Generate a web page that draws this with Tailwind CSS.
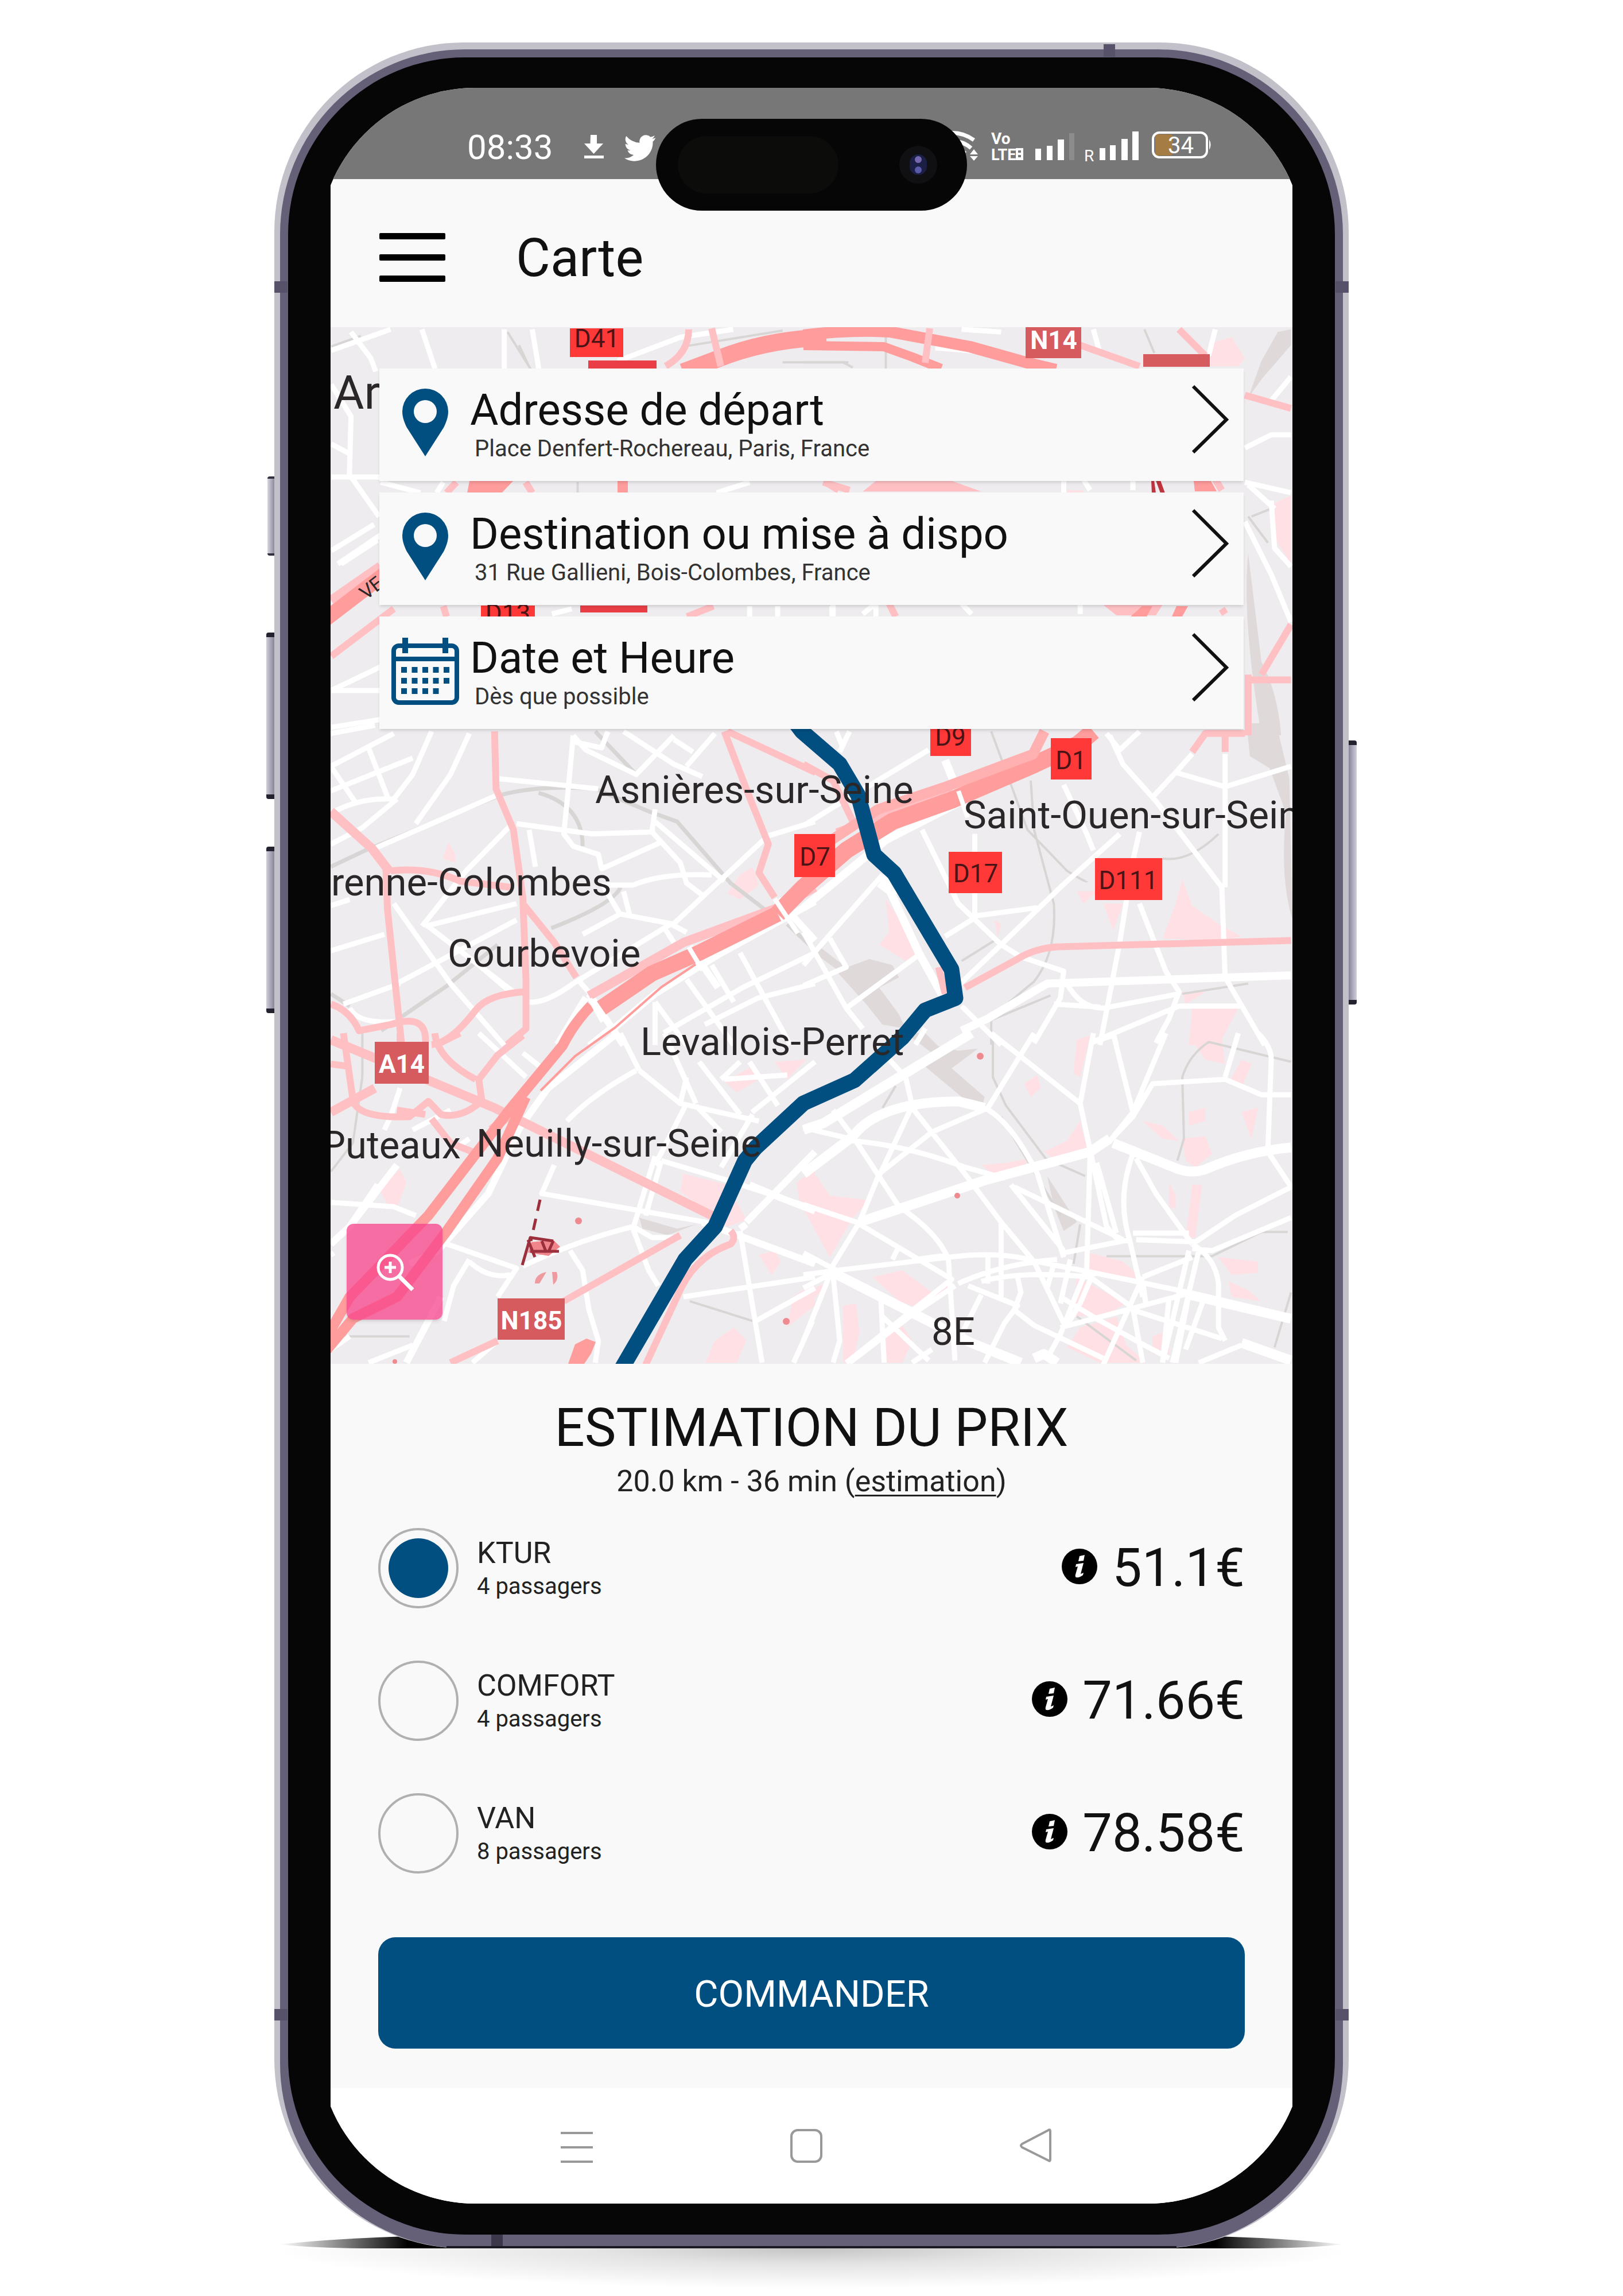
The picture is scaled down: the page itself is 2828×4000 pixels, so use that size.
<!DOCTYPE html>
<html lang="fr">
<head>
<meta charset="utf-8">
<meta name="viewport" content="width=device-width, initial-scale=1">
<title>Carte</title>
<script src="https://cdn.jsdelivr.net/npm/@tailwindcss/browser@4"></script>
</head>
<body class="bg-white font-['Roboto',sans-serif] text-[#111]">
<main class="overflow-hidden pt-[74px]">
  <div class="relative z-10 mx-auto w-full max-w-[1872px]">
    <!-- contact shadow -->
    <svg class="absolute bottom-0 left-0 h-[60px] w-full overflow-visible" viewBox="0 0 1872 60" preserveAspectRatio="none" aria-hidden="true">
      <defs>
        <linearGradient id="floor"><stop offset="0" stop-color="#000" stop-opacity="0"/><stop offset=".12" stop-color="#000"/><stop offset=".88" stop-color="#000"/><stop offset="1" stop-color="#000" stop-opacity="0"/></linearGradient>
      </defs>
      <path fill="url(#floor)" d="M10 53Q150 38 330 38H1542Q1722 38 1862 53Q1800 60 1700 60H172Q70 60 10 53z"/>
    </svg>
    <!-- side buttons -->
    <div class="absolute top-[756px] -left-[12px] h-[138px] w-[16px] rounded-sm border-y-4 border-[#33313f] bg-linear-to-r from-[#d8d7de] to-[#77718a]"></div>
    <div class="absolute top-[1028px] -left-[14px] h-[290px] w-[18px] rounded-sm border-y-8 border-[#24222e] bg-linear-to-r from-[#d0cfd8] to-[#77718a]"></div>
    <div class="absolute top-[1401px] -left-[14px] h-[290px] w-[18px] rounded-sm border-y-8 border-[#24222e] bg-linear-to-r from-[#d0cfd8] to-[#77718a]"></div>
    <div class="absolute top-[1216px] -right-[14px] h-[460px] w-[18px] rounded-sm border-y-8 border-[#24222e] bg-linear-to-l from-[#d0cfd8] to-[#77718a]"></div>

    <div class="relative rounded-[330px] bg-[#c2c0c9] px-[10px] pt-[12px]">
      <div class="rounded-[322px] bg-[#665f78] px-[14px] pt-[14px] pb-[24px]">
        <div class="rounded-[308px] bg-[#060606] px-[54px] pt-[53px] pb-[54px]">
          <div class="overflow-hidden rounded-[272px] bg-[#060606] px-[20px]">
            <div class="bg-[#f9f9f9]">

              <!-- status bar -->
              <div class="flex h-[159px] items-start justify-between bg-[#777] pt-[69px] pr-[136px] pl-[238px] text-white">
                <div class="flex items-start">
                  <span class="text-[60px] leading-[70px]">08:33</span>
                  <svg class="ml-[54px] h-[60px] w-[130px]" viewBox="1017 222 130 60" fill="#fff" aria-hidden="true">
                    <path d="M1029 235h11v15h11l-16.500 18-16.500-18h10.500zM1018 271h34v5h-34z"/>
                    <path transform="translate(1088 229) scale(2.300)" d="M23.600 4.900c-.9.400-1.800.600-2.800.800 1-.6 1.800-1.600 2.100-2.700-.9.600-2 1-3.100 1.200A4.900 4.900 0 0 0 11.500 8.600 13.900 13.900 0 0 1 1.400 3.500a4.900 4.900 0 0 0 1.500 6.500c-.8 0-1.500-.2-2.200-.6 0 2.300 1.600 4.400 3.900 4.900-.7.200-1.500.2-2.200.1.600 1.900 2.400 3.300 4.600 3.400A9.900 9.900 0 0 1 0 20.200 13.900 13.900 0 0 0 21.500 7.700c.8-.7 1.600-1.600 2.100-2.800z"/>
                  </svg>
                </div>
                <svg class="h-[64px] w-[436px] overflow-visible" viewBox="1680 222 436 64" fill="#fff" aria-hidden="true">
                  <path d="M1640 234q32-8 57 10M1650 248q24-6 42 10M1660 264q12-4 22 3" fill="none" stroke="#fff" stroke-width="7"/>
                  <path d="M1690 269l7-9 7 9zM1690 272h14l-7 8z"/>
                  <text x="1727" y="251" font-size="28" font-weight="700">Vo</text>
                  <text x="1727" y="279" font-size="27" font-weight="700">LTE</text>
                  <path fill-rule="evenodd" d="M1770 258h13v21h-13zM1774 262v4h5v-4zM1774 270v4h5v-4z"/>
                  <path d="M1804 259h10v20h-10zM1824 254h10v25h-10zM1843 243h11v36h-11z"/>
                  <path fill="#8c8c8c" d="M1863 232h9v47h-9z"/>
                  <text x="1889" y="281" font-size="28">R</text>
                  <path d="M1916 258h10v21h-10zM1934 253h10v26h-10zM1954 242h11v37h-11zM1973 229h11v50h-11z"/>
                  <rect x="2013" y="234" width="30" height="37" rx="4" fill="#a57c43"/>
                  <rect x="2009" y="231" width="94" height="43" rx="11" fill="none" stroke="#fff" stroke-width="4"/>
                  <path d="M2107 243q5 9 0 18z"/>
                  <text x="2035" y="267" font-size="40">34</text>
                </svg>
              </div>

              <!-- app bar -->
              <header class="flex h-[258px] items-center gap-[123px] pt-[14px] pl-[85px]">
                <button type="button" aria-label="Menu" class="flex w-[115px] flex-col gap-[26px]">
                  <span class="h-[11px] w-full rounded-xs bg-black"></span>
                  <span class="h-[11px] w-full rounded-xs bg-black"></span>
                  <span class="h-[11px] w-full rounded-xs bg-black"></span>
                </button>
                <h1 class="pt-[4px] text-[92px] leading-[108px]">Carte</h1>
              </header>

              <!-- map -->
              <section aria-label="Carte du trajet" class="relative min-h-[1806px] overflow-hidden bg-[#efecef] px-[85px] pt-[72px]">
                <svg class="absolute inset-0 h-full w-full" viewBox="576 570 1676 1806" preserveAspectRatio="xMidYMid slice" fill="none" stroke-linejoin="round">
                  <!-- built-up areas and parks -->
                  <g fill="#ffe0e4">
                    <path transform="translate(1400 560) scale(.574 .4592)" d="M1240 80l60-20 40 80-20 30h-90zM1430 690l50-30v260l-50-100zM800 640h50v70h-40z"/>
                    <path transform="translate(560 1260) scale(.5485 .3571)" d="M385 660l20-80 20 60v40zM1330 740l40-40 20 90-60 70-40-30z"/>
                    <path transform="translate(1400 1260) scale(.574 .3571)" d="M250 860l80 180 30 100-50 20-80-80 30-60zM1130 880l20-120 30 130 80 90 70 60-60 20-180-10zM910 880h60l-30 130zM580 960l20 20-10 60zM1180 1390h140l-60 180h-90zM1150 1310h70l-60 60zM830 820h60l-40 60z"/>
                    <path transform="translate(560 1800) scale(.5485 .3827)" d="M180 700l70-80 20 60-30 120-30-20zM1150 640l140 50 60 160-60 30-150-160zM1280 220l90-70 20 60-70 60zM1440 130l100-10-60 90zM1510 680l58-60v180l-50-40zM1250 1400l60-60 40 60-30 100h-100zM1500 1200l68-70v110l-90 100zM1390 1010l50-20 20 50-30 60z"/>
                    <path transform="translate(1400 1800) scale(.574 .3827)" d="M0 680l40-30 40 90 120 20-50 80-70 180L0 800zM210 1110l90-30 90 100 60-60v60l-100 70-60-30zM0 1180l80-50-80 130zM120 1240l40-10 10 130-20 140h-30zM240 1380l60-50 30 70-30 100h-60zM870 1000l100 40 60 80-90-20-80-20zM830 1110l150 120-60 50-100 10zM840 1340l110-50 30 130 60 80-140 0-100-70zM540 600l80-10 60-20-10 60-80 30zM730 540l70-50 40-90 20 130-100 40zM830 30l40-20-30 190-20-20zM670 230l40-40 10 60-30 40zM1170 10l100 10 10 120-60-20zM1330 120l30 20-30 110-40-20zM1030 400l60 20 50 70-50-10zM1170 360l50-20v60l-50 20zM1150 480l70-10 20 80-50 60-30-30zM1180 690h30l-20 240h-30zM1330 360l50-20-20 140zM1260 1020l120 20v50l-80 10zM1290 1130l60 40 40 50-90-20zM1110 680l20 60v60l-20-10zM1060 1380l50-30v110h-50z"/>
                  </g>
                  <!-- railways -->
                  <g fill="#dfdad9">
                    <path transform="translate(1400 560) scale(.574 .4592)" d="M1480 30v60l-90 130-40 70 40-140 50-110zM1350 880q-20 240 40 690h60q-10-160-60-280z"/>
                    <path transform="translate(1400 1260) scale(.574 .3571)" d="M1345 0h90l40 270 10 690q-40-200-20-520l-50-220-60-60zM100 1210l100-60 70 30 20 60-60 50 60 130 20 70-70-20-50-100zM40 1080l90 110-30 10-60-70z"/>
                    <path transform="translate(1400 1800) scale(.574 .3827)" d="M310 0h60l40 60 60 20 60-10-80 90 100 130-10 60-60-60-120-150 30-50zM740 650l30 70 60 140-40 40-30-110z"/>
                    <path transform="translate(560 1800) scale(.5485 .3827)" d="M1010 840l120 50 60-20-90 50-80-30z"/>
                  </g>
                  <g stroke="#d8d5d5" stroke-width="4">
                    <g transform="translate(560 560) scale(.574 .4592)"><path vector-effect="non-scaling-stroke" d="M30 95L120 55M565 40l70 140M600 90l30 80M1100 95l300-60M1400 155h200M778 610v40"/></g>
                    <g transform="translate(1400 560) scale(.574 .4592)"><path vector-effect="non-scaling-stroke" d="M0 155l120 0 30 20M1035 30l30 90M250 30v150M1350 740l60 100M1360 740l60-30"/></g>
                    <g transform="translate(560 1260) scale(.5485 .3571)"><path vector-effect="non-scaling-stroke" stroke-width="7" d="M30 700l110-80 430-270q120-50 300-30l170 110 90 50 170 300 110 130M690 340q140 60 140 260M730 1000q200-120 220-200M870 40l130 210M190 1500L400 1280l160-200M30 1320l60 60M1480 980l90 130"/></g>
                    <g transform="translate(1400 1260) scale(.574 .3571)"><path vector-effect="non-scaling-stroke" d="M570 40l60 260 50 220 120 200q60 60 60 50M690 280l10 240 60 360q10 240-60 380l-120 160M1260 540q-90 140-170 120M480 1160l100-100M570 1568v-120l180-120M1150 1320l200-50"/></g>
                    <g transform="translate(560 1800) scale(.5485 .3827)"><path vector-effect="non-scaling-stroke" d="M130 0v200l-30 300-70 130M1170 1220l200 90M30 1380h250"/></g>
                    <g transform="translate(1400 1800) scale(.574 .3827)"><path vector-effect="non-scaling-stroke" d="M575 0v200l40 130 120 240 120 80M1480 130l-250-90q-60 60-80 160l5 280-20 100M600 380l180 450M840 870l-20 180M920 1015h320l150-110h80M1480 1180l-50 250M830 1290l180 200M240 340l40-100"/></g>
                  </g>
                  <!-- streets -->
                  <g stroke="#fff" stroke-width="9">
                    <g transform="translate(560 560) scale(.574 .4592)"><path vector-effect="non-scaling-stroke" d="M30 110L210 30M90 40l60 100 15 50M305 30l40 150M555 30v150M640 30l20 150M900 150l190-90 160-30M30 240l60 120-5 220 90 160M30 590h150M30 465l60 40M50 920l130-110M30 870l130-100M60 920l110-90M180 610l120 40M370 610l-20 40M1200 650l100-40M700 1110l60-20M1300 1080v40M1385 1080v40M1550 1080v40M30 1400l150-90M30 1400h150M30 1540l150-30"/></g>
                    <g transform="translate(1400 560) scale(.574 .4592)"><path vector-effect="non-scaling-stroke" d="M400 100q240 20 300 70M880 30l20 90M1250 30l-20 100M1480 210l-60 90M1340 480l80-50h60M1340 610l140 40M1350 620l80 90M1420 680l10 180 50 70M1340 760l80 200 60 180M480 30l120 10M790 600v50M850 600l20 40M1000 600v40M90 1070v50M220 1070v50M480 1070l30 40M840 1070v40M180 1110l40-40"/></g>
                    <g transform="translate(560 1260) scale(.5485 .3571)"><path vector-effect="non-scaling-stroke" d="M30 210L230 50M30 330l260-160M30 440q90-80 200-70l60-120 60-210M470 50l-60 200L300 490M30 590l100-80 110-140M30 210l80 180M150 120l60 240M30 50l140-40M170 610l390-260M560 270l320 50M600 500L460 720 320 990M620 490l240 50 200-10M800 60l-20 330-10 150 30 60 80 40 10 70 190-130M660 520l20 180M1060 420l-10 110 90 150 20 100 60 70M1060 480l220 290M960 40l160 160 90 60M1250 50l-90 160M1120 60L1000 250 840 130 800 60M800 90l90 30 20-80M1120 80l60 60M890 790h100q90-60 250-50M1568 480l-150 70-300 430-170-50-50-130M960 820l20 120M1110 980L800 1270q-90 100-140 90M830 1030l120-100M230 880l180 390 170 300M30 1110l170-80M30 890l60-30M240 1270l380-310M70 1370l180-100M330 990l290-110M330 980l280 330M500 1180l100 130M90 1390q30 90 180 60M860 1330l-40-70M1090 1000l30 70M1110 980l50 40"/></g>
                    <g transform="translate(560 1260) scale(.5485 .3571)"><path vector-effect="non-scaling-stroke" d="M1568 1120l-230 170-250 220M1568 1270l-180 70-170 130M1160 1250l150 320M1240 1180l70 180M1330 1120l160 450M1060 1360v210M1060 1360l100 210M930 1470l-80 100"/><path vector-effect="non-scaling-stroke" stroke-width="12" d="M1568 870L1260 1130 1060 1320 920 1500M1450 860l118 200M1170 1090l90 200M850 1320l110 250M750 1568l90-230"/></g>
                    <g transform="translate(1400 1260) scale(.574 .3571)"><path vector-effect="non-scaling-stroke" d="M100 40l20 80M140 40l-30 100M380 130L100 400 0 500M930 60l40 140 100 180 200 420 10 440 120 330M1280 150v650M1180 150l-50 90-70 120M1130 240l150 70 200-100M1020 40l-60 90-40-80M960 540l-180 260-180 280-130 200M360 520l110 360 130 200 60 60 130 70-10 130-80 220M520 540l-0 400 190-40M430 1040l90-90M1020 530l-20 140-40 400-60 500M1020 880l80 330 40 100-30 130-40 120M790 300l70 240 20 80M240 740L70 1050 0 1180M80 1050l50 140-130 90M0 1020l130 370 50 100M350 1130l-220 260M480 1380l120 190M800 1270q40 120 110 120l230-70M760 1370l140 15M870 1560l270-180h190M340 1568l30-80M940 1510l10 60"/><path vector-effect="non-scaling-stroke" stroke-width="14" d="M430 180l50 200M480 1500l80-60 180-170 740-40M240 740l110 380 90 260M0 900l250-330 230-190M230 780l50 60"/></g>
                    <g transform="translate(560 1800) scale(.5485 .3827)"><path vector-effect="non-scaling-stroke" d="M780 400q80-120 220-230M1010 170l-60-170M1010 170l130 150 250 80M1140 320l20-120M1160 320l-100 280M1090 0l100 320M1130 130l60 190M1200 130l130 240M1270 210l60-80M1360 130l90 200M1568 130l-200 230M1480 190l-200 20M740 600l-40 130 520 130M1080 580l-50 250M1060 560l-70 330 50 190 30 70M1080 580l210 90 280 130M1190 330l80 120M1270 610l100-240M640 1060q180-120 350-180l60 50h70M790 990l40 90 20 180 30 140-10 100M400 960l220 110-60 130M470 1030l-50 120-30 160M470 1040q60 80 130 60M30 770l200 20 70 40M30 1010l10-10M30 1440l60-60M560 1400l-80 100M1150 1200l418-90M1330 900l70 600M1380 1310l188-150M1500 1500l60-190M150 1500l140-80M250 250l-30 130-20 60M290 440l120-90M500 0l150 200M470 480l-60 60M640 90l70 80"/><path vector-effect="non-scaling-stroke" stroke-width="12" d="M940 0l-220 250-90 180-100 300-160 260-90 60M180 690L90 880 30 960M240 600L90 880M1350 860l218-320M1210 860l358 190M270 1500l110-300M1330 890l20-20M1360 690l100 60 108 60"/></g>
                    <g transform="translate(1400 1800) scale(.574 .3827)"><path vector-effect="non-scaling-stroke" d="M570 0l270 320 80 560 40 70M700 0L560 340 390 450 230 640 170 860 80 1080M260 120l50 80 20 130-100 320M330 340l160 300M90 350l60 120 140 320q120 120 150 240l20 460M150 490q160 20 340 120l120 50M550 340q80 60 160 300l80 380M490 640l110 220v340M520 700l80 160 100 180 90 280M630 690l160 300M640 700l330 240M880 0l-40 320M880 40l60-30M940 0l60 360-70 130M1100 0l-100 360M930 490l70-110 60-150 220-20 110 70h90M1320 0l-40 200M1380 0q40 60 40 120l-10 400M1410 540l70 160-170 130-130 130M1480 840l-240 150-60-10M1000 550q-50 200-10 390l40 260M1010 570l60 160 110 230M870 550l-10 520-80 300-40 110M890 590l60 320M1180 960q70 60 80 180v200l20 60M1200 990l-80 510M1170 990l-80 510M1030 1110l150-90M1000 910h170M1010 940l180 10M0 780l160 80 290 260-320 380M0 1100l100-20 340-60q160-30 270 20l170 50 290 90M790 1000l200-60M340 1030l100-20M270 1030l20-60M80 1100L0 1400M90 1100l20 300-20 100M0 1160l90-70M100 1080L0 1000M460 1150l-120 120-200 230M500 1150l150 90-40 80-60 180M540 1190l-60 180M470 1140q130-90 300-110M540 1130q120-50 330-20M760 1050l-20 110M810 1030l-30 200M560 1010v130M650 1110l10 70-20 80 60 70 210 150M780 1340l400-160M800 1330l40-100M780 1200l110 100 120 100 100 80M870 1110l130 140 30 250M1030 1110l-120 400M1000 1260l270 130M880 1090l-40 140M1110 1200l-20 300M1170 1190l-40 310M1220 1190l-60 250M1030 1130l10 110M1200 1500l130-80M235 1210l10 290M240 1290l140 200M330 1500l60-60M0 430l140 50"/><path vector-effect="non-scaling-stroke" stroke-width="17" d="M510 0L60 410 0 440M150 470q80-160 320-160l80 30M0 640l150-170M170 860l380-190 320-130 60-60M940 500l200 120q40 20 80 0 120-80 260-100M90 1090l420 320 150 90M1170 1190l310 110M700 1480l30-20 40 40M1330 1410l150 80"/></g>
                  </g>
                  <!-- main roads -->
                  <g stroke="#ffc0c4" stroke-width="12">
                    <g transform="translate(560 560) scale(.574 .4592)"><path vector-effect="non-scaling-stroke" d="M1115 30q0 90-70 140M370 1080l10 40M380 650l30-40M640 650l-20-40M1110 1120l80-40M30 1270l190-180M1530 610l40 30"/><path vector-effect="non-scaling-stroke" stroke-width="18" d="M30 1060l150-130"/></g>
                    <g transform="translate(1400 560) scale(.574 .4592)"><path vector-effect="non-scaling-stroke" d="M840 90l180 80M1140 30l80 100M1340 280l140 50M1280 1110l-10-20M260 1070l20 50M1390 1340l90-190M1340 1360h140M1350 1340v230M1250 600l20 40M60 610l80 30"/><path fill="#ffc0c4" stroke="none" d="M180 645l40-40h230l90 40zM910 1075h180l-20 40H950z"/></g>
                    <g transform="translate(560 1260) scale(.5485 .3571)"><path vector-effect="non-scaling-stroke" d="M550 40l5 280 55 200 30 330 10 400v240l-60 78M640 880l100 190 70 170M1280 40l80 320 60 230-30 140 50 120M1290 40l280 200M205 710l5 200 45 658M220 720q120-20 220 50l160 30M650 1310q-120 10-160 90-80 160-140 168M30 1370q60 30 90 130l100-30q120-60 110 98"/><path vector-effect="non-scaling-stroke" stroke-width="16" d="M30 430l130 180 60 120M850 1330l300-260 300-170 118-100"/></g>
                    <g transform="translate(1400 1260) scale(.574 .3571)"><path vector-effect="non-scaling-stroke" d="M0 200l90 80 60 200M490 1290l160-140q60-60 140-60l690-30M1180 140l40-90h120M1280 60v80M410 1190l20 130M100 530l350-200"/></g>
                    <g transform="translate(560 1800) scale(.5485 .3827)"><path vector-effect="non-scaling-stroke" d="M70 0l30 300q10 90 180 80l60-70 40 60q60 20 120-50M640 10l-80 90-60 110 10 100M360 0q10 120 130 210M350 390l60 110 70 40M240 350l90 20M770 1220l370-300M560 1400l-150 100M1300 900q20 30 0 60-120 60-170 240l-100 310M30 140l50 10M250 0v40M370 50l70-50"/><path vector-effect="non-scaling-stroke" stroke-width="16" d="M30 30l520 310 690 490M30 360l140-110M600 370l-60 70"/></g>
                  </g>
                  <!-- motorways -->
                  <g stroke="#ff9c9c">
                    <path stroke-width="30" d="M1190 648L1270 618Q1350 590 1440 588"/>
                    <path stroke-width="20" d="M1400 584Q1480 574 1550 578L1690 604 1790 632 1840 644"/>
                    <path stroke-width="16" d="M1400 602L1540 604 1590 622 1640 642"/>
                    <path stroke-width="26" d="M560 1084l110-84"/>
                    <path stroke-width="30" d="M1905 1274l-26 22-77 36-144 62-103 37-80 50-75 65-45 46"/>
                    <path stroke-width="18" stroke="#ffb0b0" d="M1820 1274l-20 40-150 56-120 40-85 56"/>
                    <path stroke-width="28" d="M1355 1592l-137 68-82 36-88 60"/>
                    <path stroke-width="18" d="M1030 1752q-30 30-50 70l-91 110-66 86-77 100-137 142-40 70M916 1911l-49 107-88 126-87 115-77 38-50 60"/>
                    <path stroke-width="4" d="M1212 1680l-60 40-80 70-70 50-60 60"/>
                    <path fill="#ff9c9c" stroke="none" d="M990 2376l12-34 20-10 16 6-8 20-12 18zM818 838h76l-20 21h-60zM1076 838h18v21h-18zM2080 838h30l10 18h-38zM1990 1056h18l-10 18h-28zM2050 1056h20l-10 18h-18z"/>
                  </g>
                  <path stroke="#ffc0c4" stroke-width="12" d="M1240 572l16 66M1620 572l-8 60"/>
                  <g stroke="#fff" stroke-width="8"><path d="M1670 1378l16 46M1350 1566l40 60M1200 1650l24 40M1028 1740l22 40"/></g>
                  <path stroke="#9c2f3c" stroke-width="5" stroke-dasharray="20 14" d="M941 2090l-16 72"/>
                  <path fill="#f0868c" d="M926 2164l38-4 12 12-20 16-36-6z"/>
                  <path stroke="#9c2f3c" stroke-width="5" d="M910 2204l14-48 40 6M920 2160l12 30M924 2180h50M944 2162l8 20M964 2162l-8 18"/>
                  <path fill="#ee9a9f" d="M932 2236q0-16 20-20-6 10-12 20zM962 2216h8q4 14-6 22z"/>
                  <g fill="#ee8a90"><circle cx="1008" cy="2127" r="6"/><circle cx="1708" cy="1840" r="6"/><circle cx="1668" cy="2083" r="5"/><circle cx="688" cy="2372" r="4"/><circle cx="1370" cy="2302" r="6"/></g>

                  <!-- route -->
                  <path stroke="#004f80" stroke-width="27" d="M1385 1258l12 16 66 57 32 54 28 104 35 32 100 168 7 50-53 21-40 48-83 74-89 40-83 77-19 23-52 115-52 57-120 206"/>

                  <!-- road shields -->
                  <g fill="#ff3838"><path d="M993 572h93v50h-93zM838 1055h94v21h-94zM1621 1260h71v57h-71zM1831 1286h71v72h-71zM1384 1453h71v75h-71zM1653 1484h93v72h-93zM1908 1495h117v73h-117z"/><path fill="#e93e45" d="M1025 628h119v16h-119zM1011 1055h117v12h-117z"/></g>
                  <path fill="#d65b5f" d="M1787 570h97v54h-97zM1992 617h116v22h-116zM653 1815h94v73h-94zM867 2262h117v72h-117z"/>
                  <path fill="#c0343d" d="M2006 837h5l3 22h-7zM2014 837h8l8 22h-8z"/>
                  <g fill="#4a1416" font-size="44" text-anchor="middle">
                    <text x="1040" y="605">D41</text><text x="885" y="1084">D13</text><text x="1656" y="1299">D9</text><text x="1866" y="1340">D1</text><text x="1420" y="1508">D7</text><text x="1700" y="1537">D17</text><text x="1966" y="1549">D111</text>
                  </g>
                  <g fill="#fff" font-size="44" font-weight="700" text-anchor="middle">
                    <text x="1836" y="608">N14</text><text x="700" y="1869">A14</text><text x="926" y="2316">N185</text>
                  </g>

                  <!-- place names -->
                  <g fill="#2b2728" font-size="67">
                    <text x="581" y="712" font-size="82">Ar</text>
                    <text x="1037" y="1399">Asnières-sur-Seine</text>
                    <text x="1679" y="1443">Saint-Ouen-sur-Seine</text>
                    <text x="577" y="1560">renne-Colombes</text>
                    <text x="780" y="1684">Courbevoie</text>
                    <text x="1116" y="1838">Levallois-Perret</text>
                    <text x="803" y="2018" text-anchor="end">Puteaux</text>
                    <text x="830" y="2015">Neuilly-sur-Seine</text>
                    <text x="1623" y="2343">8E</text>
                    <text transform="translate(638 1046) rotate(-38)" font-size="34">VE</text>
                  </g>
                </svg>

                <div class="relative flex flex-col gap-[20px]">
                  <button type="button" class="flex h-[196px] w-full items-start bg-[#f9f9f9] pt-[28px] text-left shadow-md">
                    <span class="flex w-[158px] shrink-0 justify-center pt-[7px] pl-[2px]">
                      <svg class="h-[118px] w-[80px]" viewBox="0 0 80 118" fill="#004f80" aria-hidden="true"><path fill-rule="evenodd" d="M40 0a40 40 0 0 1 40 40c0 10-4 20-8 28L40 118 8 68C4 60 0 50 0 40A40 40 0 0 1 40 0zm0 20a20 20 0 1 0 0 40 20 20 0 0 0 0-40z"/></svg>
                    </span>
                    <span class="flex grow flex-col">
                      <span class="text-[76px] leading-[88px]">Adresse de départ</span>
                      <span class="pl-[8px] text-[40px] leading-[48px] text-[#333]">Place Denfert-Rochereau, Paris, France</span>
                    </span>
                    <svg class="mr-[25px] h-[120px] w-[66px]" viewBox="0 0 66 120" fill="none" stroke="#111" stroke-width="6" aria-hidden="true"><path d="M3 3l58 58-58 57"/></svg>
                  </button>
                  <button type="button" class="flex h-[196px] w-full items-start bg-[#f9f9f9] pt-[28px] text-left shadow-md">
                    <span class="flex w-[158px] shrink-0 justify-center pt-[7px] pl-[2px]">
                      <svg class="h-[118px] w-[80px]" viewBox="0 0 80 118" fill="#004f80" aria-hidden="true"><path fill-rule="evenodd" d="M40 0a40 40 0 0 1 40 40c0 10-4 20-8 28L40 118 8 68C4 60 0 50 0 40A40 40 0 0 1 40 0zm0 20a20 20 0 1 0 0 40 20 20 0 0 0 0-40z"/></svg>
                    </span>
                    <span class="flex grow flex-col">
                      <span class="text-[76px] leading-[88px]">Destination ou mise à dispo</span>
                      <span class="pl-[8px] text-[40px] leading-[48px] text-[#333]">31 Rue Gallieni, Bois-Colombes, France</span>
                    </span>
                    <svg class="mr-[25px] h-[120px] w-[66px]" viewBox="0 0 66 120" fill="none" stroke="#111" stroke-width="6" aria-hidden="true"><path d="M3 3l58 58-58 57"/></svg>
                  </button>
                  <button type="button" class="flex h-[196px] w-full items-start bg-[#f9f9f9] pt-[28px] text-left shadow-md">
                    <span class="flex w-[158px] shrink-0 justify-center pt-[9px] pl-[2px]">
                      <svg class="h-[118px] w-[118px]" viewBox="0 0 118 118" fill="none" stroke="#004f80" stroke-width="8" aria-hidden="true">
                        <rect x="4" y="14" width="110" height="99" rx="9"/><path d="M4 37h110"/><path stroke-width="10" d="M24 0v27M94 0v27"/>
                        <path stroke-width="10" stroke-dasharray="10 8.500" d="M17 56h86M17 75h86M17 93h68"/>
                      </svg>
                    </span>
                    <span class="flex grow flex-col">
                      <span class="text-[76px] leading-[88px]">Date et Heure</span>
                      <span class="pl-[8px] text-[40px] leading-[48px] text-[#333]">Dès que possible</span>
                    </span>
                    <svg class="mr-[25px] h-[120px] w-[66px]" viewBox="0 0 66 120" fill="none" stroke="#111" stroke-width="6" aria-hidden="true"><path d="M3 3l58 58-58 57"/></svg>
                  </button>
                </div>

                <button type="button" aria-label="Zoomer" class="absolute bottom-[77px] left-[28px] flex size-[167px] items-center justify-center rounded-xl bg-[#f74389]/75 shadow-md">
                  <svg class="size-[68px]" viewBox="0 0 68 68" fill="none" stroke="#fff" stroke-width="5" aria-hidden="true"><circle cx="26" cy="26" r="21"/><path d="M26 16v20M16 26h20"/><path stroke-width="7" d="M41 41l24 24"/></svg>
                </button>
              </section>

              <!-- price estimate -->
              <section class="px-[83px] pt-[58px] pb-[69px]">
                <h2 class="text-center text-[92px] leading-[108px]">ESTIMATION DU PRIX</h2>
                <p class="mt-[9px] text-center text-[52px] leading-[60px] text-[#222]">20.0 km - 36 min (<a href="#" class="underline decoration-3 underline-offset-6">estimation</a>)</p>
                <div class="mt-[51px] flex flex-col gap-[91px]">
                  <div class="flex h-[140px] items-center">
                    <input id="ktur" type="radio" name="gamme" checked class="size-[140px] shrink-0 appearance-none rounded-full border-4 border-[#b0b0b0] bg-clip-content p-[14px] checked:bg-[#004f80]">
                    <label for="ktur" class="flex grow flex-col gap-[4px] pl-[32px]"><span class="text-[52px] leading-[60px] text-[#222]">KTUR</span><span class="text-[40px] leading-[48px] text-[#222]">4 passagers</span></label>
                    <button type="button" aria-label="Détails KTUR" class="mr-[26px] mb-[6px]"><svg class="size-[62px]" viewBox="0 0 62 62" aria-hidden="true"><circle cx="31" cy="31" r="31"/><path fill="#fff" d="M31 13l9-2-2 10-9 1zM25 27l13-2-5 19 5-2-1 4q-6 5-12 4-2-1-1-5l4-14-4 1z"/></svg></button>
                    <span class="text-[92px] leading-[108px]">51.1€</span>
                  </div>
                  <div class="flex h-[140px] items-center">
                    <input id="comfort" type="radio" name="gamme" class="size-[140px] shrink-0 appearance-none rounded-full border-4 border-[#b0b0b0] bg-clip-content p-[14px] checked:bg-[#004f80]">
                    <label for="comfort" class="flex grow flex-col gap-[4px] pl-[32px]"><span class="text-[52px] leading-[60px] text-[#222]">COMFORT</span><span class="text-[40px] leading-[48px] text-[#222]">4 passagers</span></label>
                    <button type="button" aria-label="Détails COMFORT" class="mr-[26px] mb-[6px]"><svg class="size-[62px]" viewBox="0 0 62 62" aria-hidden="true"><circle cx="31" cy="31" r="31"/><path fill="#fff" d="M31 13l9-2-2 10-9 1zM25 27l13-2-5 19 5-2-1 4q-6 5-12 4-2-1-1-5l4-14-4 1z"/></svg></button>
                    <span class="text-[92px] leading-[108px]">71.66€</span>
                  </div>
                  <div class="flex h-[140px] items-center">
                    <input id="van" type="radio" name="gamme" class="size-[140px] shrink-0 appearance-none rounded-full border-4 border-[#b0b0b0] bg-clip-content p-[14px] checked:bg-[#004f80]">
                    <label for="van" class="flex grow flex-col gap-[4px] pl-[32px]"><span class="text-[52px] leading-[60px] text-[#222]">VAN</span><span class="text-[40px] leading-[48px] text-[#222]">8 passagers</span></label>
                    <button type="button" aria-label="Détails VAN" class="mr-[26px] mb-[6px]"><svg class="size-[62px]" viewBox="0 0 62 62" aria-hidden="true"><circle cx="31" cy="31" r="31"/><path fill="#fff" d="M31 13l9-2-2 10-9 1zM25 27l13-2-5 19 5-2-1 4q-6 5-12 4-2-1-1-5l4-14-4 1z"/></svg></button>
                    <span class="text-[92px] leading-[108px]">78.58€</span>
                  </div>
                </div>
                <button type="button" class="mt-[111px] h-[194px] w-full rounded-[30px] bg-[#004f80] pt-[6px] text-[65px] text-white">COMMANDER</button>
              </section>

              <!-- system navigation -->
              <nav class="flex h-[201px] justify-center gap-[340px] bg-white pt-[70px] pr-[18px]">
                <button type="button" aria-label="Récents" class="size-[60px]"><svg viewBox="0 0 60 60" fill="none" stroke="#999" stroke-width="4" aria-hidden="true"><path d="M2 8h56M2 33h56M2 58h56"/></svg></button>
                <button type="button" aria-label="Accueil" class="size-[60px]"><svg viewBox="0 0 60 60" fill="none" stroke="#999" stroke-width="4" aria-hidden="true"><rect x="4" y="3" width="52" height="55" rx="11"/></svg></button>
                <button type="button" aria-label="Retour" class="size-[60px]"><svg viewBox="0 0 60 60" fill="none" stroke="#999" stroke-width="4" stroke-linejoin="round" aria-hidden="true"><path d="M52 3q3-2 3 2v49q0 4-3 2L6 33q-4-3 0-6z"/></svg></button>
              </nav>
            </div>
          </div>
        </div>
      </div>
    </div>

    <!-- antenna bands -->
    <div class="absolute top-[416px] left-0 h-[20px] w-[23px] bg-[#57516a]"></div>
    <div class="absolute top-[416px] right-0 h-[20px] w-[23px] bg-[#57516a]"></div>
    <div class="absolute bottom-[397px] left-0 h-[20px] w-[23px] bg-[#57516a]"></div>
    <div class="absolute right-0 bottom-[397px] h-[20px] w-[23px] bg-[#57516a]"></div>
    <div class="absolute top-[3px] right-[407px] h-[22px] w-[20px] bg-[#57516a]"></div>
    <div class="absolute bottom-0 left-[378px] h-[24px] w-[20px] bg-[#3c374b]"></div>
    <div class="absolute inset-x-[300px] bottom-0 h-[4px] bg-[#1b1922]"></div>

    <!-- camera cut-out -->
    <div class="absolute top-[133px] left-1/2 flex h-[160px] w-[542px] -translate-x-1/2 items-center justify-between rounded-full bg-[#060606] pr-[52px] pl-[38px]">
      <span class="h-[100px] w-[280px] rounded-full bg-[#0c0c0b]"></span>
      <span class="flex size-[66px] items-center justify-center rounded-full bg-[#101013]"><span class="flex h-[36px] w-[30px] flex-col items-center justify-between rounded-full bg-[#1c1f45] py-[3px]"><span class="size-[12px] rounded-full bg-[#7468b0]"></span><span class="size-[12px] rounded-full bg-[#5a5aa8]"></span></span></span>
    </div>
  </div>
  <!-- floor shadow -->
  <div class="mx-auto h-[82px] w-full max-w-[1872px] bg-[radial-gradient(ellipse_50%_85%_at_50%_0%,#c4c4c4,#e4e4e4_40%,#ffffff)]"></div>
</main>
</body>
</html>
